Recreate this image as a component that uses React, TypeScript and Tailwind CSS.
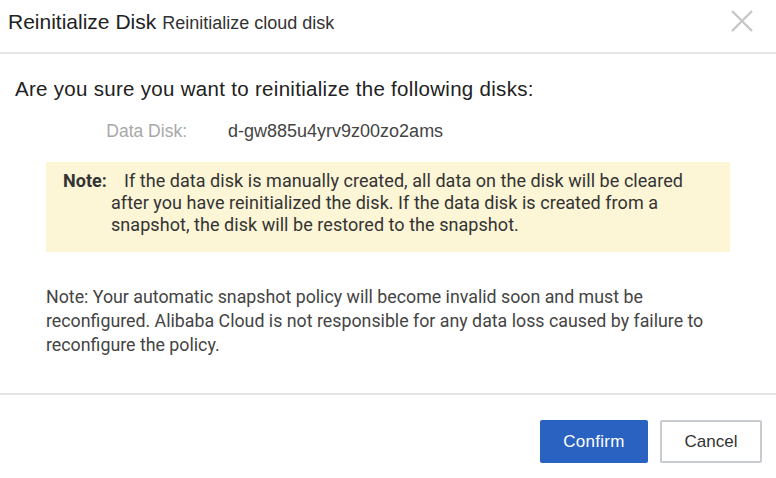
import React from "react";

export default function App() {
  return (
    <div className="w-[776px] h-[478px] bg-white flex flex-col overflow-hidden" style={{ fontFamily: '"Liberation Sans", Arial, sans-serif' }}>
      <div className="h-[54px] shrink-0 flex items-start pl-[8px] pr-[22px] border-b-2 border-[#e5e5e5]">
        <div className="flex items-baseline gap-[6px] pt-[6px]">
          <span className="text-[21px] text-[#222]">Reinitialize Disk</span>
          <span className="text-[18px] text-[#333]">Reinitialize cloud disk</span>
        </div>
        <div className="ml-auto pt-[9px]">
          <svg width="24" height="24" viewBox="0 0 24 24">
            <path d="M2 2 L22 22 M22 2 L2 22" stroke="#c7c7c7" strokeWidth="2.4" fill="none" />
          </svg>
        </div>
      </div>
      <div className="pt-[24px] pl-[15px]">
        <div className="text-[20.5px] leading-[22px] text-[#222] tracking-[0.3px]">Are you sure you want to reinitialize the following disks:</div>
        <div className="flex mt-[20px] text-[17.5px] leading-[22px]">
          <span className="w-[172px] text-right text-[#a8a8a8]">Data Disk:</span>
          <span className="ml-[41px] text-[#444] text-[18px]">d-gw885u4yrv9z00zo2ams</span>
        </div>
      </div>
      <div className="mx-[46px] mt-[20px] w-[684px] h-[90px] bg-[#fcf5d6] pl-[17px] pr-[10px] pt-[8px] flex text-[18px] leading-[22px] tracking-[0.05px] text-[#333]" style={{ fontFamily: 'Roboto, "Liberation Sans", sans-serif' }}>
        <span className="font-bold w-[48px] shrink-0">Note:</span>
        <span className="flex-1 indent-[13px]">If the data disk is manually created, all data on the disk will be cleared after you have reinitialized the disk. If the data disk is created from a snapshot, the disk will be restored to the snapshot.</span>
      </div>
      <div className="mx-[46px] mt-[33px] text-[17.8px] leading-[24px] text-[#444]" style={{ fontFamily: 'Roboto, "Liberation Sans", sans-serif' }}>
        Note: Your automatic snapshot policy will become invalid soon and must be reconfigured. Alibaba Cloud is not responsible for any data loss caused by failure to reconfigure the policy.
      </div>
      <div className="mt-auto h-[85px] shrink-0 border-t-2 border-[#e5e5e5] pt-[25px] flex justify-end gap-[12px] pr-[14px]">
        <button className="w-[108px] h-[43px] rounded-[2px] bg-[#2a62c2] text-white text-[17px] tracking-[0.3px]">Confirm</button>
        <button className="w-[102px] h-[43px] rounded-[2px] border-2 border-[#c8ccd0] text-[#333] text-[17px] bg-white">Cancel</button>
      </div>
    </div>
  );
}
